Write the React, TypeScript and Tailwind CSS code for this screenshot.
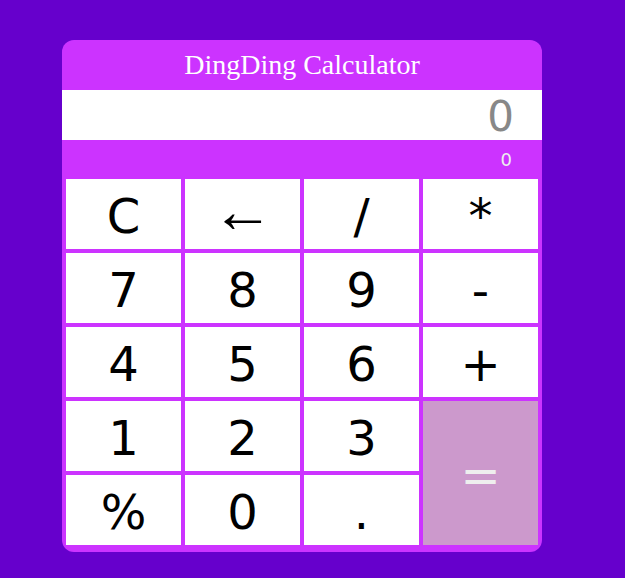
import React, { useState } from "react";

const keys: { label: string; tall?: boolean; thin?: boolean }[] = [
  { label: "C" },
  { label: "←", thin: true },
  { label: "/" },
  { label: "*" },
  { label: "7" },
  { label: "8" },
  { label: "9" },
  { label: "-" },
  { label: "4" },
  { label: "5" },
  { label: "6" },
  { label: "+" },
  { label: "1" },
  { label: "2" },
  { label: "3" },
  { label: "=", tall: true },
  { label: "%" },
  { label: "0" },
  { label: "." },
];

export default function App() {
  const [display] = useState("0");
  const [history] = useState("0");

  return (
    <div className="min-h-screen w-full bg-[#6600cc] pt-[40px] pl-[62px]">
      <div className="w-[480px] rounded-[12px] bg-[#cc33ff] pb-[7px] overflow-hidden">
        {/* Header */}
        <div className="h-[50px] flex items-center justify-center text-white text-[28px] font-['Liberation_Serif',serif]">
          DingDing Calculator
        </div>

        {/* Display */}
        <div className="h-[50px] bg-white flex items-center justify-end pr-[28px] pt-[4px] text-[42px] text-[#888888] font-['DejaVu_Sans',sans-serif] leading-none">
          {display}
        </div>
        <div className="h-[39px] flex items-center justify-end pr-[30px] text-[18px] text-[#eeeeee] font-['DejaVu_Sans',sans-serif] leading-none">
          {history}
        </div>

        {/* Keypad */}
        <div className="grid grid-cols-4 grid-rows-[repeat(5,70px)] gap-[4px] px-[4px]">
          {keys.map((k) => (
            <button
              key={k.label}
              className={`flex items-center justify-center leading-none ${
                k.thin
                  ? "font-['Liberation_Sans',sans-serif] text-[62px] pb-[6px]"
                  : "font-['DejaVu_Sans',sans-serif] text-[48px] pt-[3px]"
              } ${
                k.tall
                  ? "row-span-2 bg-[#cc99cc] text-[#eeeeee] text-[40px]"
                  : "bg-white text-black"
              }`}
            >
              {k.label}
            </button>
          ))}
        </div>
      </div>
    </div>
  );
}
